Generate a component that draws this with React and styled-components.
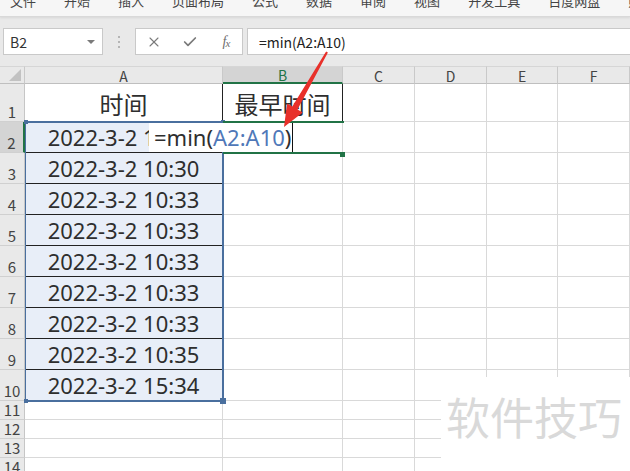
import React from 'react';
import styled, { createGlobalStyle } from 'styled-components';
import { X, Check } from 'lucide-react';

const Global = createGlobalStyle`
  html, body { margin: 0; padding: 0; background: #fff; }
  body { font-family: "Noto Sans CJK SC", "Noto Sans", sans-serif; }
  * { box-sizing: border-box; }
`;

const Page = styled.div`
  position: relative;
  width: 630px;
  height: 471px;
  overflow: hidden;
  background: #fff;
`;

const MenuBar = styled.div`
  position: relative;
  z-index: 1;
  height: 17px;
  display: flex;
  gap: 28px;
  padding-left: 10px;
  overflow: hidden;
  background: #f6f6f6;
  border-bottom: 1px solid #d9d9d9;
  box-shadow: 0 1px 2px rgba(0, 0, 0, 0.08);
`;

const MenuItem = styled.span`
  font-size: 13px;
  line-height: 16px;
  color: #444;
  margin-top: -7px;
  white-space: nowrap;
`;

const FormulaArea = styled.div`
  height: 49px;
  display: flex;
  align-items: flex-start;
  padding: 11px 0 0 3px;
  background: #e9e9e9;
`;

const NameBox = styled.div`
  width: 100px;
  height: 27px;
  display: flex;
  align-items: center;
  justify-content: space-between;
  padding: 0 7px 0 6px;
  background: #fff;
  border: 1px solid #c9c9c9;
  font-size: 14px;
  color: #333;
`;

const Caret = styled.span`
  width: 0;
  height: 0;
  border-left: 4px solid transparent;
  border-right: 4px solid transparent;
  border-top: 4px solid #7a7a7a;
`;

const Dots = styled.div`
  width: 32px;
  height: 27px;
  display: flex;
  flex-direction: column;
  align-items: center;
  justify-content: center;
  gap: 3px;
`;

const Dot = styled.span`
  width: 2px;
  height: 2px;
  background: #b5b5b5;
`;

const ButtonsBox = styled.div`
  width: 108px;
  height: 27px;
  display: grid;
  grid-template-columns: repeat(3, 36px);
  background: #fff;
  border: 1px solid #c9c9c9;
`;

const IconSlot = styled.div`
  display: flex;
  align-items: center;
  justify-content: center;
  color: #7a7a7a;
`;

const Fx = styled.span`
  font-family: "Liberation Serif", "DejaVu Serif", serif;
  font-style: italic;
  font-size: 14px;
  color: #6e6e6e;
  letter-spacing: -1px;
  sub {
    font-size: 11px;
    vertical-align: -1px;
  }
`;

const FormulaInput = styled.div`
  flex: 1;
  height: 27px;
  margin-left: 4px;
  display: flex;
  align-items: center;
  padding-left: 11px;
  background: #fff;
  border: 1px solid #c9c9c9;
  border-right: none;
  font-size: 14px;
  color: #222;
`;

const Sheet = styled.div`
  position: relative;
  display: grid;
  grid-template-columns: 25px 198px 120px 72px 72px 71px 72px;
  grid-template-rows: 18px 38px repeat(9, 31px) repeat(4, 19px);
`;

const HeadCell = styled.div`
  display: flex;
  align-items: center;
  justify-content: center;
  padding-top: 1px;
  font-size: 14px;
  line-height: 1;
  color: ${(p) => (p.$active ? '#217346' : '#444')};
  background: ${(p) => (p.$active ? '#d4d4d4' : '#e9e9e9')};
  border-top: 1px solid #d6d6d6;
  border-right: 1px solid #c9c9c9;
  border-bottom: ${(p) => (p.$active ? '2px solid #217346' : '1px solid #bfbfbf')};
`;

const Corner = styled(HeadCell)`
  position: relative;
  svg { position: absolute; right: 3px; bottom: 2px; }
`;

const RowHead = styled.div`
  display: flex;
  align-items: flex-end;
  justify-content: center;
  padding-bottom: 1px;
  font-size: 15px;
  line-height: 17px;
  color: #444;
  background: ${(p) => (p.$active ? '#d4d4d4' : '#e9e9e9')};
  border-right: ${(p) => (p.$active ? '2px solid #217346' : '1px solid #c6c6c6')};
  border-bottom: 1px solid #d0d0d0;
`;

const Cell = styled.div`
  display: flex;
  align-items: flex-end;
  justify-content: center;
  padding-bottom: ${(p) => (p.$tall ? 1 : 0)}px;
  overflow: hidden;
  white-space: nowrap;
  font-family: "Noto Sans", "Noto Sans CJK SC", sans-serif;
  font-size: ${(p) => (p.$tall ? 24 : 22)}px;
  line-height: 30px;
  color: #2e2e2e;
  background: ${(p) => (p.$sel ? '#e8eef8' : '#fff')};
  border-right: 1px solid ${(p) => (p.$darkRight ? '#222' : '#d9d9d9')};
  border-bottom: 1px solid ${(p) => (p.$darkBottom ? '#222' : '#d9d9d9')};
`;

const RangeBox = styled.div`
  position: absolute;
  left: 25px;
  top: 55px;
  width: 199px;
  height: 281px;
  border: 2px solid #4a6f9e;
  border-left-width: 1px;
  pointer-events: none;
`;

const Handle = styled.span`
  position: absolute;
  width: ${(p) => p.$s}px;
  height: ${(p) => p.$s}px;
  background: ${(p) => p.$c};
`;

const ActiveLine = styled.div`
  position: absolute;
  left: 223px;
  width: 121px;
  height: 2px;
  background: #217346;
`;

const EditBox = styled.div`
  position: absolute;
  left: 149px;
  top: 57px;
  width: 193px;
  height: 29px;
  display: flex;
  align-items: flex-end;
  padding-left: 5px;
  background: #fff;
  font-family: "Noto Sans", sans-serif;
  font-size: 22px;
  line-height: 29px;
  color: #2e2e2e;
  white-space: nowrap;
`;

const Ref = styled.span`
  color: #4f78b8;
`;

const Cursor = styled.span`
  display: inline-block;
  align-self: stretch;
  width: 1px;
  margin-left: 1px;
  background: #111;
`;

const Arrow = styled.svg`
  position: absolute;
  left: 275px;
  top: 45px;
  pointer-events: none;
`;

const Watermark = styled.div`
  position: absolute;
  left: 441px;
  top: 377px;
  width: 189px;
  height: 94px;
  padding: 14px 0 0 5px;
  background: #fff;
  font-size: 44px;
  line-height: 50px;
  color: #d9d9d9;
  white-space: nowrap;
`;

const menus = ['文件', '开始', '插入', '页面布局', '公式', '数据', '审阅', '视图', '开发工具', '百度网盘', '照'];
const cols = ['A', 'B', 'C', 'D', 'E', 'F'];

const rows = [
  { n: 1, a: '时间', b: '最早时间' },
  { n: 2, a: '2022-3-2 10:20' },
  { n: 3, a: '2022-3-2 10:30' },
  { n: 4, a: '2022-3-2 10:33' },
  { n: 5, a: '2022-3-2 10:33' },
  { n: 6, a: '2022-3-2 10:33' },
  { n: 7, a: '2022-3-2 10:33' },
  { n: 8, a: '2022-3-2 10:33' },
  { n: 9, a: '2022-3-2 10:35' },
  { n: 10, a: '2022-3-2 15:34' },
  { n: 11 },
  { n: 12 },
  { n: 13 },
  { n: 14 },
];

export default function App() {
  return (
    <Page>
      <Global />
      <MenuBar>
        {menus.map((m) => (
          <MenuItem key={m}>{m}</MenuItem>
        ))}
      </MenuBar>
      <FormulaArea>
        <NameBox>
          B2
          <Caret />
        </NameBox>
        <Dots>
          <Dot />
          <Dot />
          <Dot />
        </Dots>
        <ButtonsBox>
          <IconSlot>
            <X size={16} strokeWidth={1.6} />
          </IconSlot>
          <IconSlot>
            <Check size={16} strokeWidth={2.6} />
          </IconSlot>
          <IconSlot>
            <Fx>
              f<sub>x</sub>
            </Fx>
          </IconSlot>
        </ButtonsBox>
        <FormulaInput>=min(A2:A10)</FormulaInput>
      </FormulaArea>
      <Sheet>
        <Corner>
          <svg width="12" height="12" viewBox="0 0 12 12">
            <polygon points="12,0 12,12 0,12" fill="#c2c2c2" />
          </svg>
        </Corner>
        {cols.map((c) => (
          <HeadCell key={c} $active={c === 'B'}>
            {c}
          </HeadCell>
        ))}
        {rows.map((r) => {
          const inRange = r.n >= 2 && r.n <= 10;
          return (
            <React.Fragment key={r.n}>
              <RowHead $active={r.n === 2}>{r.n}</RowHead>
              <Cell $sel={inRange} $tall={r.n === 1} $darkBottom={inRange} $darkRight={r.n === 1}>
                {r.a}
              </Cell>
              <Cell $tall={r.n === 1} $darkRight={r.n === 1}>
                {r.b}
              </Cell>
              <Cell />
              <Cell />
              <Cell />
              <Cell />
            </React.Fragment>
          );
        })}
        <RangeBox>
          <Handle $s={4} $c="#4a6f9e" style={{ left: -2, top: -3 }} />
          <Handle $s={4} $c="#4a6f9e" style={{ right: -3, top: -3 }} />
          <Handle $s={4} $c="#4a6f9e" style={{ left: -2, bottom: -3 }} />
          <Handle $s={6} $c="#4a6f9e" style={{ right: -4, bottom: -4 }} />
        </RangeBox>
        <ActiveLine style={{ top: 55 }} />
        <ActiveLine style={{ top: 86 }} />
        <Handle $s={5} $c="#217346" style={{ left: 340, top: 86 }} />
        <EditBox>
          =min(<Ref>A2:A10</Ref>)<Cursor />
        </EditBox>
      </Sheet>
      <Arrow width="60" height="90" viewBox="275 45 60 90">
        <polygon
          points="326.1,51.5 327.9,52.5 297.5,109.4 302.7,112.4 284,127 287.1,103.4 292.3,106.4"
          fill="#e8302a"
        />
      </Arrow>
      <Watermark>软件技巧</Watermark>
    </Page>
  );
}
